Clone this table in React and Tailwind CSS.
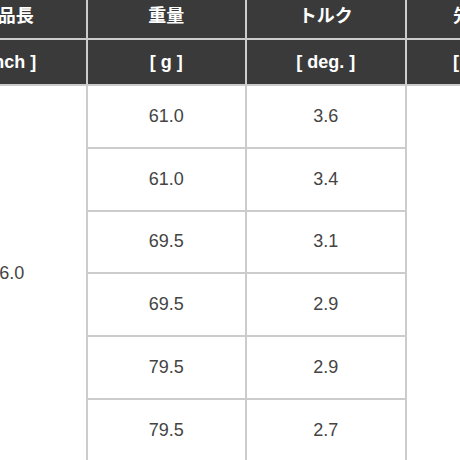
const heads = [
  { name: '製品長', unit: '[ inch ]' },
  { name: '重量', unit: '[ g ]' },
  { name: 'トルク', unit: '[ deg. ]' },
  { name: '先端径', unit: '[ mm ]' },
];

const rows = [
  ['61.0', '3.6'],
  ['61.0', '3.4'],
  ['69.5', '3.1'],
  ['69.5', '2.9'],
  ['79.5', '2.9'],
  ['79.5', '2.7'],
];

const font = { fontFamily: '"Liberation Sans", "Noto Sans CJK JP", sans-serif' };

export default function App() {
  return (
    <div className="w-[460px] h-[460px] overflow-hidden bg-white" style={font}>
      <div className="-ml-[74px] -mt-[8px] w-[628px] p-[2px] bg-[#cccccc] grid grid-cols-[157.5px_157.5px_157.5px_147px] grid-rows-[44px_44px_repeat(6,60.8px)] gap-[2px]">
        {heads.map((h) => (
          <div key={h.name} className="bg-[#3a3a3a] text-white font-bold text-[18px] flex items-center justify-center whitespace-nowrap">
            {h.name}
          </div>
        ))}
        {heads.map((h) => (
          <div key={h.unit} className="bg-[#3a3a3a] text-white font-bold text-[18px] flex items-center justify-center whitespace-nowrap">
            {h.unit}
          </div>
        ))}
        <div className="row-span-6 bg-white text-[#444] text-[18px] flex items-center justify-center">46.0</div>
        {rows.map((r, i) => (
          <>
            <div key={'w' + i} className="bg-white text-[#444] text-[18px] flex items-center justify-center">{r[0]}</div>
            <div key={'t' + i} className="bg-white text-[#444] text-[18px] flex items-center justify-center">{r[1]}</div>
            {i === 0 ? <div key="e" className="row-span-6 bg-white" /> : null}
          </>
        ))}
      </div>
    </div>
  );
}
